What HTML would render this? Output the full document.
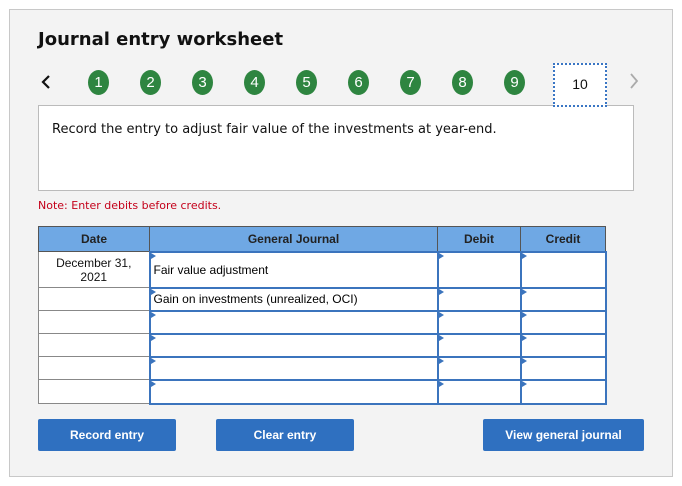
<!DOCTYPE html>
<html><head><meta charset="utf-8"><style>
*{margin:0;padding:0;box-sizing:border-box}
body{width:682px;height:486px;background:#fff;position:relative;font-family:"Liberation Sans",Arial,sans-serif;overflow:hidden}
.a{position:absolute}
.panel{left:9px;top:9px;width:664px;height:468px;background:#f3f3f3;border:1px solid #c8c8c8}
.title{left:38px;top:29px;font:bold 18px "DejaVu Sans",Verdana,sans-serif;color:#111}
.c{width:21px;height:25px;border-radius:50%;background:#2e8540;color:#fff;font:15px "Liberation Sans",sans-serif;text-align:center;line-height:25px;top:70px}
.ten{left:553px;top:63px;width:54px;height:44px;background:#fff;border:2px dotted #3a76c4;text-align:center;line-height:38px;font-size:14px;color:#111;z-index:2}
.box{left:38px;top:105px;width:596px;height:86px;background:#fff;border:1px solid #bbb}
.box p{position:absolute;left:13px;top:16px;font:13px "DejaVu Sans",Verdana,sans-serif;color:#111}
.note{left:38px;top:199px;font:11px "DejaVu Sans",Verdana,sans-serif;color:#c4001a}
table{position:absolute;left:38px;top:226px;border-collapse:collapse;font-size:12px}
th{background:#6fa8e4;border:1px solid #555;height:25px;font-weight:bold;color:#222;font-size:12px}
td{border:1px solid #888;background:#fff;padding:0;position:relative}
td.in{border:2px solid #3b74bd;padding-left:3px}
td.in::before{content:"";position:absolute;left:0;top:0;border-left:5px solid #3b74bd;border-top:3px solid transparent;border-bottom:3px solid transparent}
td.d{text-align:center;line-height:14px;color:#111}
.btn{top:419px;height:32px;background:#2f70c0;color:#fff;font-weight:bold;font-size:12px;text-align:center;line-height:32px;border-radius:2px}
</style></head><body>
<div class="a panel"></div>
<div class="a title">Journal entry worksheet</div>
<svg class="a" style="left:40px;top:74px" width="12" height="16"><path d="M9 2 L3 8 L9 14" stroke="#111" stroke-width="2.2" fill="none"/></svg>
<svg class="a" style="left:628px;top:72px" width="12" height="18"><path d="M3 2 L9 9 L3 16" stroke="#aaa" stroke-width="1.8" fill="none"/></svg>
<div class="a c" style="left:88px">1</div>
<div class="a c" style="left:140px">2</div>
<div class="a c" style="left:192px">3</div>
<div class="a c" style="left:244px">4</div>
<div class="a c" style="left:296px">5</div>
<div class="a c" style="left:348px">6</div>
<div class="a c" style="left:400px">7</div>
<div class="a c" style="left:452px">8</div>
<div class="a c" style="left:504px">9</div>
<div class="a box"><p>Record the entry to adjust fair value of the investments at year-end.</p></div>
<div class="a ten">10</div>
<div class="a note">Note: Enter debits before credits.</div>
<table>
<tr><th style="width:111px">Date</th><th style="width:288px">General Journal</th><th style="width:83px">Debit</th><th style="width:85px">Credit</th></tr>
<tr style="height:36px"><td class="d">December 31,<br>2021</td><td class="in">Fair value adjustment</td><td class="in"></td><td class="in"></td></tr>
<tr style="height:23px"><td></td><td class="in">Gain on investments (unrealized, OCI)</td><td class="in"></td><td class="in"></td></tr>
<tr style="height:23px"><td></td><td class="in"></td><td class="in"></td><td class="in"></td></tr>
<tr style="height:23px"><td></td><td class="in"></td><td class="in"></td><td class="in"></td></tr>
<tr style="height:23px"><td></td><td class="in"></td><td class="in"></td><td class="in"></td></tr>
<tr style="height:24px"><td></td><td class="in"></td><td class="in"></td><td class="in"></td></tr>
</table>
<div class="a btn" style="left:38px;width:138px">Record entry</div>
<div class="a btn" style="left:216px;width:138px">Clear entry</div>
<div class="a btn" style="left:483px;width:161px">View general journal</div>
</body></html>
